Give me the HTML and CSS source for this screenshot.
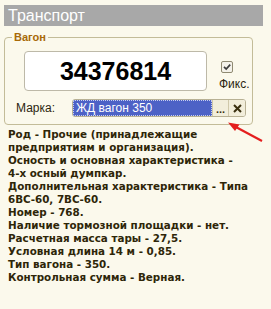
FILE: index.html
```html
<!DOCTYPE html>
<html lang="ru">
<head>
<meta charset="utf-8">
<link rel="stylesheet" href="styles.css">
</head>
<body>
<div class="page">
  <div class="title">Транспорт</div>
  <fieldset class="group">
    <legend class="legend">Вагон</legend>
    <div class="row-top">
      <div class="number">34376814</div>
      <div class="fix">
        <span class="check">
          <svg width="12" height="12" viewBox="0 0 12 12"><path d="M3 5.8 L5.2 8 L9.2 3.6" fill="none" stroke="#3c3c3c" stroke-width="1.7"/></svg>
        </span>
        <span class="fix-label">Фикс.</span>
      </div>
    </div>
    <div class="row-mark">
      <span class="mark-label">Марка:</span>
      <div class="input">
        <span class="value"><span class="sel">ЖД вагон 350</span></span>
        <span class="btn dots">...</span>
        <span class="btn clear">
          <svg width="9" height="9" viewBox="0 0 9 9"><path d="M1 1 L8 8 M8 1 L1 8" stroke="#3a3010" stroke-width="2"/></svg>
        </span>
      </div>
    </div>
  </fieldset>
  <div class="info"><div>Род - Прочие (принадлежащие</div><div>предприятиям и организация).</div><div>Осность и основная характеристика -</div><div>4-х осный думпкар.</div><div>Дополнительная характеристика - Типа</div><div>6ВС-60, 7ВС-60.</div><div>Номер - 768.</div><div>Наличие тормозной площадки - нет.</div><div>Расчетная масса тары - 27,5.</div><div>Условная длина 14 м - 0,85.</div><div>Тип вагона - 350.</div><div>Контрольная сумма - Верная.</div></div>
  <svg class="arrow" width="271" height="309" viewBox="0 0 271 309">
    <line x1="262" y1="141" x2="234" y2="126" stroke="#e41e1e" stroke-width="2.2"/>
    <path d="M228 122.5 L239.5 124.5 L235 131 Z" fill="#e41e1e"/>
  </svg>
</div>
</body>
</html>
```
FILE: styles.css
```css
html, body {
  margin: 0;
  padding: 0;
  background: #fbf9ec;
}
.page {
  position: relative;
  width: 271px;
  height: 309px;
  padding-top: 5px;
  box-sizing: border-box;
  font-family: "Liberation Sans", Arial, sans-serif;
  overflow: hidden;
}
.title {
  margin-left: 4px;
  width: 255px;
  height: 21px;
  padding-left: 4px;
  background: #a8a8a8;
  color: #ffffff;
  font-size: 16px;
  line-height: 21px;
}
.group {
  margin: 5px 0 0 4px;
  width: 249px;
  box-sizing: border-box;
  padding: 7px 0 7px 0;
  border: 1px solid #c3bc98;
  border-radius: 4px;
  min-width: 0;
}
.legend {
  margin-left: 7px;
  padding: 0 2px;
  font-size: 11px;
  font-weight: bold;
  line-height: 13px;
  color: #a86a08;
}
.row-top {
  display: flex;
  align-items: flex-start;
}
.number {
  margin-left: 19px;
  width: 183px;
  height: 40px;
  box-sizing: border-box;
  background: #ffffff;
  border: 1px solid #bdb9a8;
  border-radius: 4px;
  font-size: 25px;
  font-weight: bold;
  line-height: 38px;
  text-align: center;
  color: #000000;
}
.fix {
  display: flex;
  flex-direction: column;
  align-items: flex-start;
  margin-left: 12px;
  padding-top: 10px;
}
.check {
  display: block;
  width: 12px;
  height: 12px;
  margin-left: 2px;
  box-sizing: border-box;
  border: 1px solid #8f8a72;
  border-radius: 2px;
  background: #f4f2ea;
  position: relative;
}
.check svg {
  position: absolute;
  left: -1px;
  top: -1px;
}
.fix-label {
  margin-top: 5px;
  font-size: 12px;
  line-height: 13px;
  color: #2c2610;
}
.row-mark {
  display: flex;
  align-items: center;
  margin-top: 8px;
}
.mark-label {
  margin-left: 11px;
  width: 56px;
  font-size: 12px;
  color: #2c2610;
}
.input {
  display: flex;
  width: 174px;
  height: 18px;
  box-sizing: border-box;
  border: 1px solid #b8b194;
  border-radius: 3px;
  background: #ffffff;
  overflow: hidden;
}
.value {
  flex: 1;
  display: flex;
}
.sel {
  flex: 1;
  background: #4d62c6;
  color: #ffffff;
  font-size: 12px;
  line-height: 14px;
  padding-left: 2px;
  border: 1px dotted #c8cff0;
}
.btn {
  width: 16px;
  display: flex;
  align-items: center;
  justify-content: center;
  background: #f2eedb;
  border-left: 1px solid #cfc8aa;
  color: #3a3010;
  font-size: 11px;
  font-weight: bold;
}
.dots {
  line-height: 14px;
  padding-top: 2px;
  box-sizing: border-box;
}
.info {
  margin: 3px 0 0 8px;
  font-family: "DejaVu Sans", sans-serif;
  font-size: 10.35px;
  font-weight: bold;
  line-height: 13px;
  color: #2e2608;
  white-space: nowrap;
}
.arrow {
  position: absolute;
  left: 0;
  top: 0;
  pointer-events: none;
}
```
